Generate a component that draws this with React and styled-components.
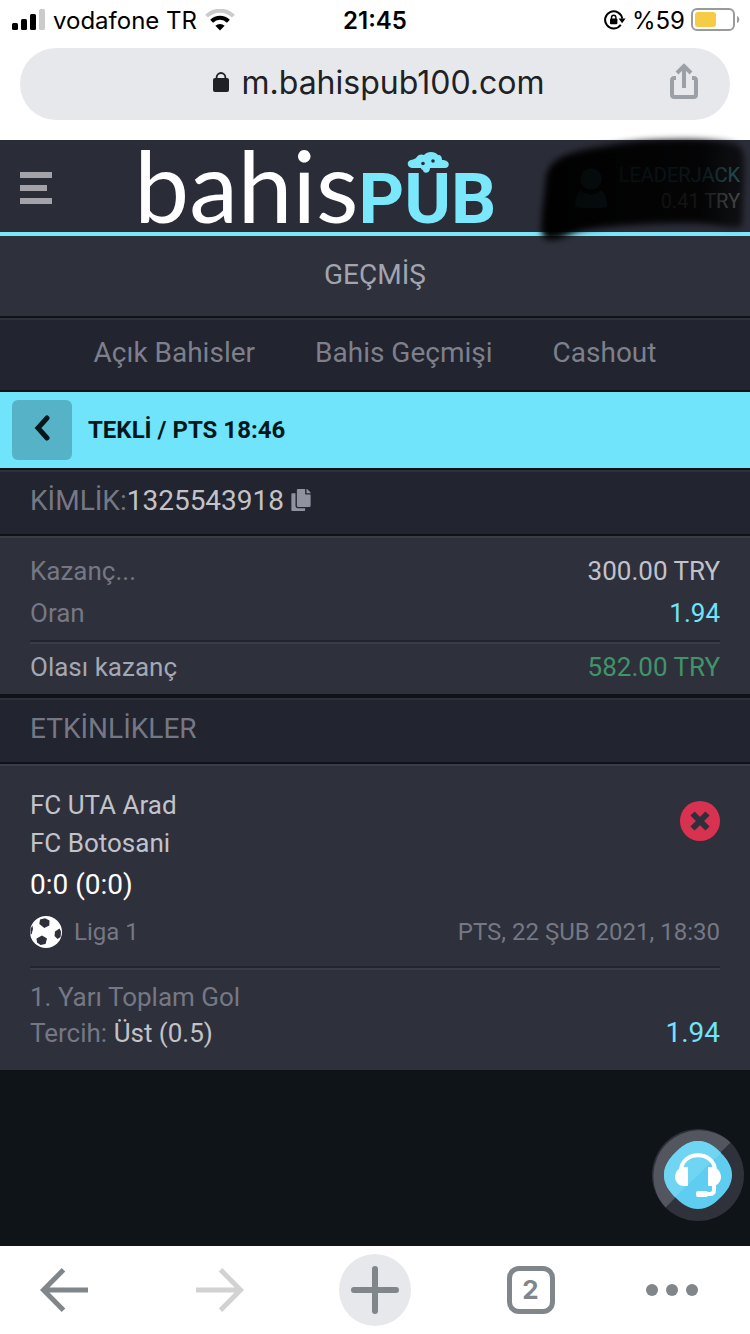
import React from "react";
import styled, { createGlobalStyle } from "styled-components";
import { FaCopy } from "react-icons/fa";

const GlobalStyle = createGlobalStyle`
  :root {
    --accent-color: #6fe4fa;
    --panel-color: #2e303c;
    --panel-dark-color: #22242f;
    --line-color: #101218;
    --muted-color: #757884;
    --text-color: #c2c3ca;
    --chrome-color: #80868a;
  }
  * {
    box-sizing: border-box;
  }
  body {
    margin: 0;
    background: #0f1418;
    font-family: Roboto, "Liberation Sans", sans-serif;
  }
  a {
    color: inherit;
    text-decoration: none;
  }
  button {
    padding: 0;
    border: 0;
    background: none;
    font: inherit;
    color: inherit;
    cursor: pointer;
  }
  svg {
    display: block;
  }
`;

const StatusBar = () => {
  return (
    <StatusBarStyled>
      <div className="carrier">
        <svg width="33" height="22" viewBox="0 0 33 22">
          <rect x="0" y="14" width="6" height="7" rx="1.5" />
          <rect x="9" y="10" width="6" height="11" rx="1.5" />
          <rect x="18" y="5" width="6" height="16" rx="1.5" />
          <rect x="27" y="0" width="6" height="21" rx="1.5" fill="#cbcbcb" />
        </svg>
        <span>vodafone TR</span>
        <svg width="30" height="22" viewBox="0 0 30 22">
          <path d="M1.6 7.2a19 19 0 0 1 26.8 0" fill="none" stroke="#cbcbcb" strokeWidth="4" />
          <path d="M6.6 12.2a12 12 0 0 1 16.8 0" fill="none" stroke="#000" strokeWidth="4" />
          <path d="M10.4 16.8a6.6 6.6 0 0 1 9.2 0L15 21.6z" />
        </svg>
      </div>
      <time>21:45</time>
      <div className="power">
        <svg width="22" height="20" viewBox="0 0 22 20">
          <path d="M16.8 14.8a8.6 8.6 0 1 1 1.4-6.2" fill="none" stroke="#000" strokeWidth="2" />
          <path d="M14.6 8.6h7l-3.5 4.6z" />
          <rect x="6" y="8.6" width="7.4" height="5.6" rx="1" />
          <path d="M7.5 9V7.4a2.2 2.2 0 0 1 4.4 0V9" fill="none" stroke="#000" strokeWidth="1.4" />
        </svg>
        <span>%59</span>
        <svg width="49" height="24" viewBox="0 0 49 24">
          <rect x="1" y="1" width="42" height="21" rx="5" fill="none" stroke="#9a9a9a" strokeWidth="2" />
          <rect x="4" y="4" width="21" height="15" rx="3" fill="#f6cb46" />
          <path d="M46 8c3 1 3 6 0 7z" fill="#9a9a9a" />
        </svg>
      </div>
    </StatusBarStyled>
  );
};

const AddressBar = () => {
  return (
    <AddressBarStyled>
      <a className="address" href="#top">
        <svg width="16" height="20" viewBox="0 0 16 20">
          <rect x="0" y="6" width="16" height="14" rx="2" fill="#202124" />
          <path d="M3.6 8V5.4a4.4 4.4 0 0 1 8.8 0V8" fill="none" stroke="#202124" strokeWidth="1.8" />
        </svg>
        <span>m.bahispub100.com</span>
      </a>
      <button className="share" aria-label="Paylaş">
        <svg width="28" height="36" viewBox="0 0 28 36" fill="none" stroke="#9aa0a5" strokeWidth="4">
          <path d="M6 15H4.500Q2 15 2 17.500V31.500Q2 34 4.500 34H23.500Q26 34 26 31.500V17.500Q26 15 23.500 15H22" />
          <path d="M14 25V3M7 10l7-7 7 7" />
        </svg>
      </button>
    </AddressBarStyled>
  );
};

const Header = () => {
  return (
    <HeaderStyled>
      <button className="menu" aria-label="Menü">
        <svg width="32" height="32" viewBox="0 0 32 32" fill="#a2a2a8">
          <rect width="32" height="6" />
          <rect y="13" width="27" height="6" />
          <rect y="26" width="32" height="6" />
        </svg>
      </button>
      <Logo href="#top">
        <span className="bahis">bahis</span>
        <span className="pub">
          PUB
          <svg width="42" height="22" viewBox="0 0 42 22">
            <path
              d="M5 16C0 16-1 9 4 8 7 7 8 7 9 6 11 2 15 2 17 3 20-1 28-1 31 3c3 0 4 2 4 5 9 0 8 8 3 8H23c0 6-7 6-7 2-1 0-2-1-2-2z"
              fill="#7be7fb"
            />
            <circle cx="16" cy="11.500" r="1.800" fill="#2a2c37" />
            <circle cx="26" cy="9" r="1.800" fill="#2a2c37" />
          </svg>
        </span>
      </Logo>
      <Account>
        <svg className="avatar" width="32" height="40" viewBox="0 0 32 40" fill="#6fe4fa">
          <circle cx="16" cy="11" r="10.500" />
          <path d="M6 22c5 6 15 6 20 0 4 3 6 9 6 17-10 2-22 2-32 0 0-8 2-14 6-17z" />
        </svg>
        <div>
          <p className="user">LEADERJACK</p>
          <p>0.41 TRY</p>
        </div>
        <svg className="scribble" width="218" height="120" viewBox="0 0 218 120">
          <defs>
            <filter id="soft" x="-10%" y="-10%" width="120%" height="120%">
              <feGaussianBlur stdDeviation="3" />
            </filter>
            <linearGradient id="ink">
              <stop offset="0" stopColor="#000" stopOpacity=".98" />
              <stop offset=".8" stopColor="#000" stopOpacity=".9" />
              <stop offset=".93" stopColor="#000" stopOpacity=".7" />
            </linearGradient>
          </defs>
          <path
            d="M12 45C16 20 50 18 90 11c40-5 90-4 108 0 12 3 12 12 12 24l-2 58c-6 6-28-2-48-2-40 0-82 2-110 7-14 3-24 11-34 10-12-2-8-12-8-24z"
            fill="url(#ink)"
            filter="url(#soft)"
          />
        </svg>
      </Account>
    </HeaderStyled>
  );
};

const BetSlip = () => {
  return (
    <>
      <SlipBar>
        <button aria-label="Geri">
          <svg width="16" height="26" viewBox="0 0 16 26" fill="none" stroke="#04181c" strokeWidth="5" strokeLinecap="round">
            <path d="M13 3L4 13l9 10" />
          </svg>
        </button>
        <h2>TEKLİ / PTS 18:46</h2>
      </SlipBar>
      <SectionHead>
        <span>KİMLİK:</span>
        <span className="number">1325543918</span>
        <button aria-label="Kopyala">
          <FaCopy size={22} />
        </button>
      </SectionHead>
      <Summary>
        <Row>
          <span>Kazanç...</span>
          <Value>300.00 TRY</Value>
        </Row>
        <Row>
          <span>Oran</span>
          <Value $color="var(--accent-color)">1.94</Value>
        </Row>
        <Divider />
        <Row $bright>
          <span>Olası kazanç</span>
          <Value $color="#419469">582.00 TRY</Value>
        </Row>
      </Summary>
    </>
  );
};

const Event = () => {
  return (
    <EventStyled>
      <div className="match">
        <div>
          <p>FC UTA Arad</p>
          <p>FC Botosani</p>
          <p className="score">0:0 (0:0)</p>
        </div>
        <svg className="lost" width="40" height="40" viewBox="0 0 40 40">
          <circle cx="20" cy="20" r="20" fill="#d93251" />
          <path d="M12.500 12.500l15 15M27.500 12.500l-15 15" stroke="#2e303c" strokeWidth="6" />
        </svg>
      </div>
      <div className="league">
        <svg width="32" height="32" viewBox="0 0 32 32">
          <circle cx="16" cy="16" r="16" fill="#fff" />
          <g fill="#2e303c">
            <path d="M10 3.500l5-1.200 4.500 2.200-.2 5-5 2.500-5-4z" />
            <path d="M6.500 22.500l5.500-3 5 3-1.500 5.500-5 1-3.500-2.500z" />
            <path d="M25 15.500l4.500-3 1.500 3-.4 5.500-3.100 2-3-3z" />
            <path d="M.4 13l2-3.500.6 3.500L1.800 17.500l-1.200 1.500z" />
          </g>
        </svg>
        <span>Liga 1</span>
        <time>PTS, 22 ŞUB 2021, 18:30</time>
      </div>
      <Divider />
      <div className="pick">
        <div>
          <p>1. Yarı Toplam Gol</p>
          <p>
            Tercih: <strong>Üst (0.5)</strong>
          </p>
        </div>
        <Value $color="var(--accent-color)" $large>
          1.94
        </Value>
      </div>
    </EventStyled>
  );
};

const SupportButton = () => {
  return (
    <SupportButtonStyled aria-label="Canlı destek">
      <svg width="92" height="92" viewBox="0 0 92 92">
        <circle cx="46" cy="46" r="46" fill="#2f313b" />
        <path d="M13.500 78.500A46 46 0 0 1 78.500 13.500z" fill="#53565f" />
        <path
          d="M46 12c10 0 17 6 23 12s11 13 11 22-5 16-11 22-13 12-23 12-17-6-23-12-11-13-11-22 5-16 11-22 13-12 23-12z"
          fill="#5fcdf0"
        />
        <path d="M23 68C17 62 12 55 12 46s5-16 11-22 13-12 23-12 17 6 23 12z" fill="#70d5f2" />
        <path d="M29 42c0-21 34-21 34 0" fill="none" stroke="#fff" strokeWidth="4" />
        <path d="M36 38v19h-4c-6 0-9-5-9-9s3-10 9-10zM56 38v19h4c6 0 9-5 9-9s-3-10-9-10z" fill="#fff" />
        <path d="M62 55v6q0 4-4 4H50" fill="none" stroke="#fff" strokeWidth="4" />
        <rect x="44" y="62" width="12" height="6" rx="2" fill="#fff" />
      </svg>
    </SupportButtonStyled>
  );
};

const BrowserNav = () => {
  return (
    <BrowserNavStyled>
      <button aria-label="Geri git">
        <svg width="48" height="44" viewBox="0 0 48 44" fill="none" stroke="#80868a" strokeWidth="5">
          <path d="M48 22H4M23.500 1.800L3.500 22l20 20.200" />
        </svg>
      </button>
      <button aria-label="İleri git" disabled>
        <svg width="48" height="44" viewBox="0 0 48 44" fill="none" stroke="#d2d2d2" strokeWidth="5">
          <path d="M0 22h44M24.500 1.800l20 20.200-20 20.200" />
        </svg>
      </button>
      <button aria-label="Yeni sekme">
        <span className="add">
          <svg width="48" height="48" viewBox="0 0 48 48" stroke="#80868a" strokeWidth="6" strokeLinecap="round">
            <path d="M24 3v42M3 24h42" />
          </svg>
        </span>
      </button>
      <button>
        <span className="tabs">2</span>
      </button>
      <button className="more" aria-label="Diğer">
        <svg width="52" height="12" viewBox="0 0 52 12" fill="#80868a">
          <circle cx="6" cy="6" r="6" />
          <circle cx="26" cy="6" r="6" />
          <circle cx="46" cy="6" r="6" />
        </svg>
      </button>
    </BrowserNavStyled>
  );
};

const App = () => {
  return (
    <Page id="top">
      <GlobalStyle />
      <StatusBar />
      <AddressBar />
      <Header />
      <main>
        <PageTitle>GEÇMİŞ</PageTitle>
        <HistoryTabs>
          <a href="#open">Açık Bahisler</a>
          <a href="#history">Bahis Geçmişi</a>
          <a href="#cashout">Cashout</a>
        </HistoryTabs>
        <BetSlip />
        <SectionHead>
          <span>ETKİNLİKLER</span>
        </SectionHead>
        <Event />
      </main>
      <SupportButton />
      <BrowserNav />
    </Page>
  );
};

const Page = styled.div`
  min-height: 100vh;
  display: flex;
  flex-direction: column;
  main {
    flex: 1;
  }
  p {
    margin: 0;
  }
`;

const StatusBarStyled = styled.div`
  display: grid;
  grid-template-columns: 1fr auto 1fr;
  align-items: center;
  height: 40px;
  padding: 0 12px;
  background: #fff;
  color: #000;
  font-family: Inter, sans-serif;
  font-size: 24px;
  time {
    font-weight: 600;
  }
  .carrier,
  .power {
    display: flex;
    align-items: center;
    gap: 8px;
  }
  .power {
    justify-content: flex-end;
    gap: 6px;
    margin-right: -2px;
  }
`;

const AddressBarStyled = styled.div`
  padding: 8px 20px 20px;
  background: #fff;
  display: grid;
  align-items: center;
  .address,
  .share {
    grid-area: 1 / 1;
  }
  .address {
    display: flex;
    align-items: center;
    justify-content: center;
    gap: 12px;
    height: 72px;
    border-radius: 36px;
    padding: 0 0 4px 8px;
    background: #e7e8ec;
    color: #202124;
    font-family: Inter, sans-serif;
    font-size: 32px;
  }
  .share {
    justify-self: end;
    margin-right: 32px;
    padding-bottom: 6px;
  }
`;

const HeaderStyled = styled.header`
  display: grid;
  grid-template-columns: auto 1fr auto;
  align-items: center;
  height: 96px;
  padding: 0 10px 0 20px;
  background: #2a2c37;
  border-bottom: 4px solid #7be7fb;
  .menu {
    padding-top: 4px;
  }
`;

const Logo = styled.a`
  display: flex;
  justify-self: center;
  align-items: baseline;
  height: 92px;
  padding-left: 4px;
  line-height: 90px;
  .bahis {
    color: #fff;
    font-family: Lato, sans-serif;
    font-size: 98px;
  }
  .pub {
    position: relative;
    color: #7be7fb;
    font-size: 71px;
    font-weight: 700;
  }
  .pub svg {
    position: absolute;
    left: 48px;
    top: -2px;
  }
`;

const Account = styled.div`
  position: relative;
  display: flex;
  align-items: center;
  justify-content: flex-end;
  gap: 12px;
  padding-top: 4px;
  color: #d6d6d6;
  font-size: 20px;
  line-height: 26px;
  text-align: right;
  .user {
    color: var(--accent-color);
  }
  .scribble {
    position: absolute;
    right: -12px;
    top: -26px;
  }
`;

const PageTitle = styled.h1`
  margin: 0;
  height: 82px;
  line-height: 78px;
  background: var(--panel-color);
  border-bottom: 2px solid var(--line-color);
  color: #a2a4af;
  font-size: 28px;
  font-weight: 400;
  text-align: center;
`;

const HistoryTabs = styled.nav`
  display: flex;
  justify-content: center;
  align-items: center;
  gap: 60px;
  height: 74px;
  padding-bottom: 6px;
  background: var(--panel-dark-color);
  border-top: 2px solid #2e303c;
  border-bottom: 2px solid var(--line-color);
  color: #7d808c;
  font-size: 28px;
`;

const SlipBar = styled.div`
  display: flex;
  align-items: center;
  gap: 16px;
  height: 78px;
  padding: 0 12px;
  background: var(--accent-color);
  border-bottom: 2px solid var(--line-color);
  color: #04181c;
  button {
    display: grid;
    place-items: center;
    width: 60px;
    height: 60px;
    padding-bottom: 4px;
    border-radius: 6px;
    background: #56b2c6;
  }
  h2 {
    margin: 0;
    font-size: 24px;
    font-weight: 700;
  }
`;

const SectionHead = styled.div`
  display: flex;
  align-items: center;
  height: 66px;
  padding: 0 30px 6px;
  background: var(--panel-dark-color);
  border-top: 2px solid #2e303c;
  border-bottom: 2px solid var(--line-color);
  color: var(--muted-color);
  font-size: 28px;
  .number {
    color: var(--text-color);
  }
  button {
    margin-left: 6px;
    color: #9092a0;
  }
`;

const Summary = styled.section`
  padding: 12px 30px 6px;
  background: var(--panel-color);
  border-top: 2px solid #3a3c48;
  border-bottom: 4px solid var(--line-color);
`;

const Row = styled.div`
  display: flex;
  align-items: center;
  justify-content: space-between;
  height: 42px;
  color: ${(props) => (props.$bright ? "#a5a7b1" : "var(--muted-color)")};
  font-size: 26px;
`;

const Value = styled.span`
  color: ${(props) => props.$color || "var(--text-color)"};
  font-size: ${(props) => (props.$large ? "28px" : "26px")};
`;

const Divider = styled.hr`
  height: 4px;
  margin: 6px 0 2px;
  border: 0;
  border-top: 2px solid #22242f;
  border-bottom: 2px solid #3a3c48;
`;

const EventStyled = styled.section`
  padding: 20px 30px 19px;
  background: var(--panel-color);
  border-top: 2px solid #3a3c48;
  color: var(--muted-color);
  font-size: 26px;
  line-height: 36px;
  .match,
  .pick {
    display: flex;
    justify-content: space-between;
  }
  .match {
    color: var(--text-color);
    line-height: 38px;
  }
  .score {
    color: #fff;
    font-size: 28px;
    line-height: 46px;
  }
  .lost {
    margin-top: 15px;
  }
  .league {
    display: flex;
    align-items: center;
    gap: 12px;
    height: 48px;
    margin-bottom: 10px;
    font-size: 24px;
  }
  .league time {
    margin-left: auto;
  }
  .pick {
    align-items: flex-end;
    padding-top: 7px;
  }
  strong {
    color: var(--text-color);
    font-weight: 400;
  }
`;

const SupportButtonStyled = styled.button`
  position: fixed;
  right: 6px;
  bottom: 113px;
`;

const BrowserNavStyled = styled.nav`
  display: flex;
  align-items: center;
  justify-content: space-between;
  height: 88px;
  padding: 0 24px;
  background: #fff;
  color: var(--chrome-color);
  button {
    display: flex;
    align-items: center;
    justify-content: center;
    width: 80px;
    height: 72px;
  }
  .add {
    display: grid;
    place-items: center;
    width: 72px;
    height: 72px;
    border-radius: 50%;
    background: #e7e8ec;
  }
  .tabs {
    width: 48px;
    height: 48px;
    border: 5px solid var(--chrome-color);
    border-radius: 12px;
    font-family: Inter, sans-serif;
    font-size: 26px;
    font-weight: 700;
    line-height: 38px;
  }
  .more {
    justify-content: flex-start;
  }
`;

export default App;
